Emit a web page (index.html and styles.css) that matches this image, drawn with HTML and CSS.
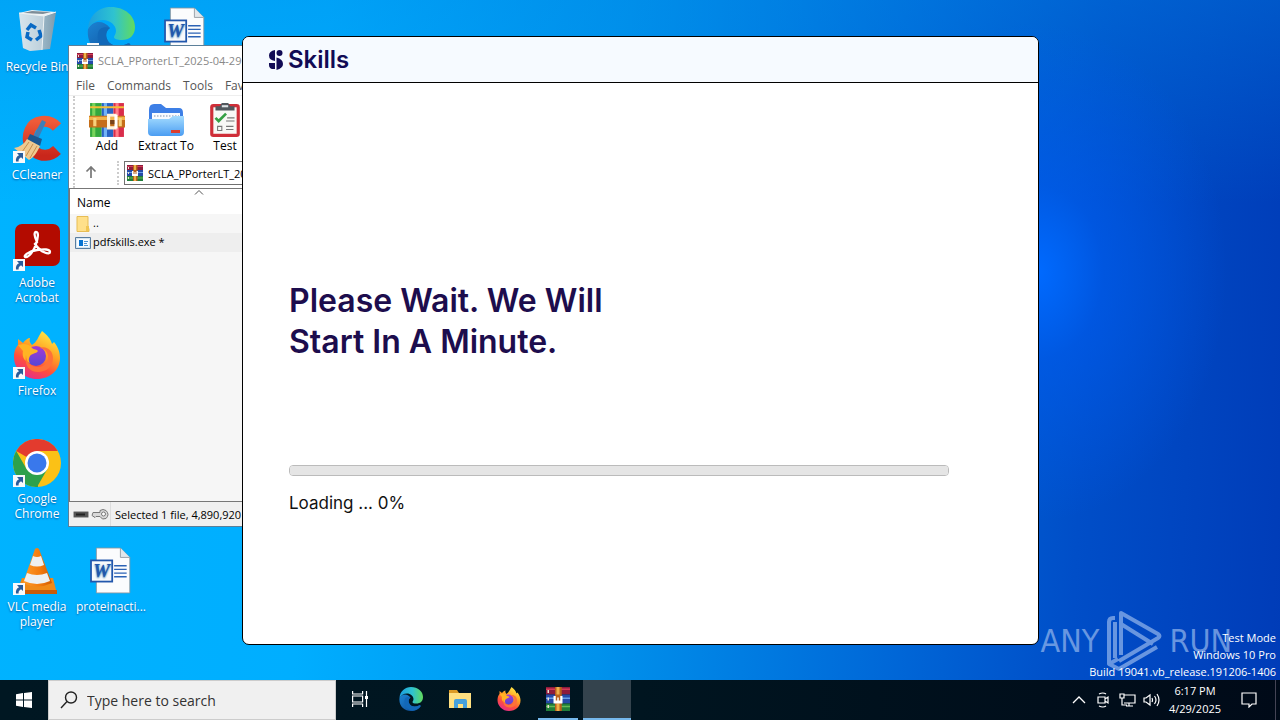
FILE: index.html
```html
<!DOCTYPE html>
<html lang="en">
<head>
<meta charset="utf-8">
<title>Desktop</title>
<link rel="stylesheet" href="styles.css">
</head>
<body>
<svg class="sprite" aria-hidden="true">
  <defs>
    <linearGradient id="edge-a" x1="0" y1="0" x2="1" y2="0"><stop offset="0" stop-color="#1b9fe0"/><stop offset=".55" stop-color="#2fc3cf"/><stop offset="1" stop-color="#62db5c"/></linearGradient>
    <linearGradient id="edge-b" x1="0" y1="0" x2="1" y2="1"><stop offset="0" stop-color="#1c83d2"/><stop offset="1" stop-color="#0d4a96"/></linearGradient>
    <linearGradient id="fox-a" x1=".8" y1="0" x2=".3" y2="1"><stop offset="0" stop-color="#fff04a"/><stop offset=".4" stop-color="#ffa423"/><stop offset=".7" stop-color="#ff503b"/><stop offset="1" stop-color="#e62b8c"/></linearGradient>
    <linearGradient id="fox-b" x1="0" y1="0" x2="0" y2="1"><stop offset="0" stop-color="#a838d2"/><stop offset="1" stop-color="#5447d6"/></linearGradient>
    <linearGradient id="folder-a" x1="0" y1="0" x2="0" y2="1"><stop offset="0" stop-color="#a4dcff"/><stop offset="1" stop-color="#4b9df2"/></linearGradient>
    <linearGradient id="cc-a" x1="0" y1="0" x2="0" y2="1"><stop offset="0" stop-color="#ef5b38"/><stop offset="1" stop-color="#c9261b"/></linearGradient>
    <linearGradient id="bin-a" x1="0" y1="0" x2="1" y2="0"><stop offset="0" stop-color="#d6dde2"/><stop offset=".6" stop-color="#aebbc4"/><stop offset="1" stop-color="#8b9aa5"/></linearGradient>
    <linearGradient id="cone-a" x1="0" y1="0" x2="1" y2="0"><stop offset="0" stop-color="#ff9c2a"/><stop offset=".6" stop-color="#f27a0c"/><stop offset="1" stop-color="#cf5c05"/></linearGradient>
  </defs>
  <symbol id="i-shortcut" viewBox="0 0 12 12"><path fill="#f7f9fb" d="M0 0h12v12H0z"/><path fill="#2a5c9a" d="M4 2h6v6L8 6.300C6 7.500 5.500 8.500 5.600 10.500H3C2.500 7.500 3.500 5.500 6 4.300z"/></symbol>
  <symbol id="i-edge" viewBox="0 0 48 48"><path fill="url(#edge-b)" d="M1 22C-1 38 11 48 24 48c8 0 15-3 19-9 1-2-1-3-3-2-7 3-17 3-20-5-2-5 0-9 3-11C16 12 5 14 1 22z"/><path fill="#1268b8" d="M11 26C9 37 17 46 27 47.500c7-1 13-4 16-8.500 1-2-1-3-3-2-7 3-17 3-20-5-2-5 0-9 3-11-6-2-11 0-12 5z"/><path fill="url(#edge-a)" d="M1 22C2 8 12 0 24 0c14 0 24 9 24 20 0 9-6 13-13 13-5 0-8-1-8-3 0-1 2-3 2-6 0-6-6-11-13-11-7 0-12 4-15 9z"/></symbol>
  <symbol id="i-word" viewBox="0 0 40 46"><path fill="#fbfcfd" stroke="#8d959c" stroke-width=".8" d="M6 1h23l9 9v34H6z"/><path fill="#e2e7eb" stroke="#8d959c" stroke-width=".8" d="M29 1v9h9"/><path stroke="#2b62b5" stroke-width="1.300" d="M23 18h12M23 21.500h12M23 25h12M23 28.500h12"/><path fill="#2257ac" d="M0 12h22v22H0z"/><path fill="#f8fafc" d="M1.700 13.700h18.600v18.600H1.700z"/><text x="11" y="29" text-anchor="middle" font-family="Liberation Serif, serif" font-weight="700" font-style="italic" font-size="18" fill="#2257ac">W</text></symbol>
  <symbol id="i-firefox" viewBox="0 0 48 48"><path fill="url(#fox-a)" d="M29 0c5 4 9 8 10 13l2-2c5 6 6 12 6 16 0 12-10 21-23 21S1 38 1 26c0-6 2-10 4-12V8l5 4c2-3 5-5 7-5-1 3 0 5 2 7 5-3 6-8 10-14z"/><circle cx="23" cy="25" r="10" fill="url(#fox-b)"/><path fill="#ffb423" d="M5 14l5-1c4 0 7 1 9 4 2 2 5 1 6 3-2 3-6 2-8 5-1 2-2 4 0 7-7-2-8-8-7-12z"/><path fill="#ff7139" d="M13 24c0 8 6 12 12 12s10-5 10-10c0-6-5-9-9-9 8-3 14 3 14 10 0 9-7 14-15 14S11 35 13 24z"/></symbol>
  <symbol id="i-books" viewBox="0 0 16 16"><path fill="#8d1b3c" d="M0 0h16v5H0z"/><path fill="#d43c58" d="M0 1h16v1H0z"/><path fill="#254aa8" d="M0 5h16v6H0z"/><path fill="#69a0e8" d="M0 7h16v1H0z"/><path fill="#207d3a" d="M0 11h16v5H0z"/><path fill="#65ba58" d="M0 12.500h16v1H0z"/><path fill="#e9e0cf" d="M1 2h1v2H1zm0 5h1v2H1zm0 5h1v2H1z"/><path fill="#b9611b" d="M6 0h4.500v16H6z"/><path fill="#edb04a" d="M7 0h2v5H7zm0 11h2v5H7z"/><path fill="#fff" d="M5 6h1.500v3h1V7h1v2h1V6H11v5H5z"/></symbol>
  <symbol id="i-add" viewBox="0 0 34 34"><path fill="#34a83e" d="M1 1h11v32H1z"/><path fill="#78d35b" d="M3 1h3v32H3z"/><path fill="#2763c5" d="M12 1h11v32H12z"/><path fill="#71b3f6" d="M14 1h3v32h-3z"/><path fill="#d92d4b" d="M23 1h10v32H23z"/><path fill="#ff7b88" d="M25 1h3v32h-3z"/><path fill="#f4bd36" d="M1 4h32v2H1z"/><path fill="#c56e19" d="M0 13h34v11H0z"/><path fill="#f2b44b" d="M0 14h34v3H0z"/><path fill="#fff4dc" d="M17 11h9v3h-6v9h6v3h-9z"/><path fill="#fff" d="M24 12h3v13h-3z"/><path fill="#77421a" d="M20 17h4v4h-4z"/><path fill="#f7d17c" d="M4 15h3v8H4zm24 0h3v8h-3z"/></symbol>
  <symbol id="i-extract" viewBox="0 0 38 36"><path fill="#3d7fe6" d="M2 8q0-6 5-6h7l5 4h13q4 0 4 5v14H2z"/><path fill="#f8fbff" d="M5 11h28v10H5z"/><path stroke="#a8b5c7" stroke-width="1.500" stroke-dasharray="1.500 1.500" d="M7 14h25"/><path fill="url(#folder-a)" d="M1 17h21l4-3h11v16q0 4-4 4H5q-4 0-4-4z"/><path fill="#dc3d2e" d="M24 28h9v3h-9z"/></symbol>
  <symbol id="i-test" viewBox="0 0 30 34"><rect x="1" y="2" width="28" height="31" rx="3" fill="#cf2e38"/><path fill="#f8f8f5" d="M4 5h22v25H4z"/><path fill="#52585e" d="M6 4h4l2-3h6l2 3h4v4H6z"/><path fill="#dfe3e6" d="M12 3h6v2h-6z"/><path stroke="#35a044" stroke-width="2.500" fill="none" d="M6 15l3 3 7-7"/><path stroke="#777" fill="none" d="M17 15h7M16 18h8M8 23h4v4H8zM16 23h7M16 26h7"/></symbol>
</svg>

<main class="desktop">
  <ul class="icons">
    <li class="icon"><svg class="icon-art" viewBox="0 0 48 48"><path fill="url(#bin-a)" fill-opacity=".9" d="M6 6l37-1-6 37-20 2-7-3z"/><path fill="#eef2f4" d="M6 6l13-3 24 2-12 4z"/><path fill="#7d8d98" d="M10 6l9-2 19 1-8 2z"/><path fill="#fff" fill-opacity=".35" d="M6 6l25 3-2 34-12 1-7-3z"/><path fill="none" stroke="#0869c4" stroke-width="3.500" d="M14 23l4-5 5 3M26 23l2 6-5 4M19 33l-5-3 1-5"/><path stroke="#edf2f4" fill="none" d="M6 6l25 3 12-4M31 9l-2 34"/></svg><span class="label">Recycle Bin</span></li>
    <li class="icon"><svg class="icon-art" viewBox="0 0 48 48"><path fill="none" stroke="url(#cc-a)" stroke-width="11" d="M44 12C36 3 21 5 17 15c-8 18 13 34 27 20"/><path fill="#3d7eb8" d="M29 5l4 2-8 17-5-2z"/><path fill="#1c5790" d="M17 19l12 5-2 7-13-6z"/><path fill="#efc990" d="M14 24l13 7c-3 7-7 12-11 14L1 33c6-1 10-4 13-9z"/><path stroke="#c78d4c" fill="none" d="M16 27L9 37M20 29l-7 12M24 31l-7 12"/></svg><svg class="shortcut"><use href="#i-shortcut"/></svg><span class="label">CCleaner</span></li>
    <li class="icon"><svg class="icon-art" viewBox="0 0 48 48"><rect x="2" y="1" width="45" height="42" rx="7" fill="#b30b00"/><path fill="none" stroke="#fff" stroke-width="2.300" d="M24 19c-3-6-3-10-1-10 3 0 2 6 0 12-2 7-7 13-10 13-4 0 2-6 11-7 7-1 13-1 13 2s-9 1-15-8z"/></svg><svg class="shortcut"><use href="#i-shortcut"/></svg><span class="label">Adobe Acrobat</span></li>
    <li class="icon"><svg class="icon-art"><use href="#i-firefox"/></svg><svg class="shortcut"><use href="#i-shortcut"/></svg><span class="label">Firefox</span></li>
    <li class="icon"><svg class="icon-art" viewBox="0 0 48 48"><circle cx="24" cy="24" r="24" fill="#fbc116"/><path fill="#e33b2e" d="M3.200 12A24 24 0 0 1 44.800 12H24v12z"/><path fill="#2da14c" d="M3.200 12L13.600 30 24 36l1 12A24 24 0 0 1 3.200 12z"/><path fill="#2da14c" d="M34.400 30L24 48l-6-14z"/><circle cx="24" cy="24" r="12" fill="#fff"/><circle cx="24" cy="24" r="9.500" fill="#3978ec"/></svg><svg class="shortcut"><use href="#i-shortcut"/></svg><span class="label">Google Chrome</span></li>
    <li class="icon"><svg class="icon-art" viewBox="0 0 48 48"><path fill="#f08a18" d="M9 31h31l4 16H3z"/><path fill="#c85b09" d="M3 43h41v4H3z"/><path fill="url(#cone-a)" d="M22 2q2-2 4 0l13 34q-15 7-29 0z"/><path fill="#eef0f0" d="M20 9q4 2 8 0l3 9q-7 3-14 0zM14 26q10 4 20 0l3 8q-13 6-26 0z"/></svg><svg class="shortcut"><use href="#i-shortcut"/></svg><span class="label">VLC media player</span></li>
    <li class="icon icon-edge"><svg class="icon-art" role="img" aria-label="Microsoft Edge"><use href="#i-edge"/></svg><svg class="shortcut"><use href="#i-shortcut"/></svg></li>
    <li class="icon icon-document"><svg class="icon-art"><use href="#i-word"/></svg><span class="label">proteinacti...</span></li>
    <li class="icon icon-edge"><svg class="icon-art" role="img" aria-label="Document"><use href="#i-word"/></svg></li>
  </ul>

  <div class="watermark" aria-label="ANY RUN">
    <span>ANY</span>
    <svg class="watermark-mark" viewBox="0 0 58 62"><path fill="none" stroke="currentColor" stroke-width="4" stroke-linejoin="round" d="M10 8H8Q4 8 4 12v42l10 5 38-22M4 54l9-5M10 12v36M16 45V3l37 21q3 2 0 4L14 51M16 14l32 20"/></svg>
    <span>RUN</span>
  </div>
  <p class="build">Test Mode<br>Windows 10 Pro<br>Build 19041.vb_release.191206-1406</p>

  <section class="archive" aria-label="Archive manager">
    <header class="archive-title"><svg class="small-icon"><use href="#i-books"/></svg><span>SCLA_PPorterLT_2025-04-29</span></header>
    <nav class="menu"><button>File</button><button>Commands</button><button>Tools</button><button>Favorites</button></nav>
    <div class="toolbar">
      <button class="tool tool-add"><svg class="tool-art"><use href="#i-add"/></svg>Add</button>
      <button class="tool tool-extract"><svg class="tool-art"><use href="#i-extract"/></svg>Extract To</button>
      <button class="tool tool-test"><svg class="tool-art"><use href="#i-test"/></svg>Test</button>
    </div>
    <div class="address">
      <button class="up" aria-label="Up one level"><svg width="12" height="12" viewBox="0 0 12 12"><path d="M6 12V1M1.500 5.500L6 1l4.500 4.500" fill="none" stroke="#777" stroke-width="1.700"/></svg></button>
      <div class="path"><svg class="small-icon"><use href="#i-books"/></svg><input aria-label="Archive path" value="SCLA_PPorterLT_2025-04-29"></div>
    </div>
    <div class="listing">
      <svg class="sort" viewBox="0 0 10 5"><path d="M1 4.500l4-4 4 4" fill="none" stroke="#555"/></svg>
      <table class="files">
        <thead><tr><th>Name</th></tr></thead>
        <tbody>
          <tr><td><svg class="file-icon" viewBox="0 0 16 16"><path fill="#ffe08a" stroke="#e7bd55" d="M2 .5h11v12h1v3H2z"/><path fill="#f1c653" d="M11 10h3v5h-3z"/></svg>..</td></tr>
          <tr class="selected"><td><svg class="file-icon" viewBox="0 0 16 16"><path fill="#d5e5f0" stroke="#587da0" d="M.5 2.500h15v11H.5z"/><path fill="#f7fbff" d="M2 4h12v8H2z"/><path fill="#0874d1" d="M4 5h4v6H4z"/><path stroke="#4d95d4" d="M9 6.500h4M9 8.500h3M9 10.500h4"/></svg>pdfskills.exe *</td></tr>
        </tbody>
      </table>
    </div>
    <footer class="status"><svg class="status-icons" viewBox="0 0 36 14"><rect x=".5" y="4.500" width="15" height="6" rx="1" fill="#555" stroke="#aaa"/><path stroke="#222" stroke-width="2" d="M3 7.500h9"/><path fill="#d8d8d8" stroke="#777" d="M20 5.500h7v-2q3-2 6 0 4 4 0 8-4 2-6-2h-4l-1 1-3-2z"/><circle cx="30.500" cy="7" r="2" fill="#fff" stroke="#777"/></svg><span class="selection">Selected 1 file, 4,890,920</span></footer>
  </section>

  <section class="installer" aria-label="Skills">
    <header class="brand"><svg class="brand-mark" viewBox="0 0 15 20"><path fill="#120b55" d="M6 0v11Q0 10 0 5.500T6 0zM0 13h6v6H3q-3-1-3-4z"/><circle cx="10.500" cy="3" r="3" fill="#120b55"/><path fill="#120b55" d="M7.500 7.500Q14 9 14 14q0 4-6.500 6z"/></svg><span>Skills</span></header>
    <div class="install-body">
      <h1>Please Wait. We Will<br>Start In A Minute.</h1>
      <progress id="load" value="0" max="100"></progress>
      <label for="load">Loading ... 0%</label>
    </div>
  </section>
</main>

<footer class="taskbar">
  <button class="start" aria-label="Start"><svg width="16" height="16" viewBox="0 0 16 16"><path fill="#fff" d="M0 2.200L7 1v6.500H0zM8 .900L16 0v7.500H8zM0 8.500h7V15l-7-1.200zM8 8.500h8V16l-8-1.100z"/></svg></button>
  <label class="search"><svg width="18" height="18" viewBox="0 0 18 18"><circle cx="11" cy="6.500" r="5.500" fill="none" stroke="#222" stroke-width="1.400"/><path stroke="#222" stroke-width="1.400" d="M7 10.500L1 17"/></svg><input type="text" placeholder="Type here to search" aria-label="Search"></label>
  <nav class="apps">
    <button aria-label="Task view"><svg width="16" height="16" viewBox="0 0 16 16"><path fill="none" stroke="#fff" stroke-width="1.200" d="M.6 0v3h10V0M.6 5h10v6H.6zM.6 16v-3h10v3M14.500 0v16"/><path fill="#fff" d="M13 5h3v3h-3z"/></svg></button>
    <button aria-label="Edge"><svg class="app-icon"><use href="#i-edge"/></svg></button>
    <button aria-label="File Explorer"><svg width="22" height="20" viewBox="0 0 22 20"><path fill="#dc9b25" d="M0 1h8l2 3h12v4H0z"/><path fill="#ffe080" d="M0 4h22v15H0z"/><path fill="#45a0dc" d="M5 19v-7q0-2 2-2h9q2 0 2 2v7h-4v-4H9v4z"/></svg></button>
    <button aria-label="Firefox"><svg class="app-icon"><use href="#i-firefox"/></svg></button>
    <button class="running" aria-label="WinRAR"><svg class="app-icon"><use href="#i-books"/></svg></button>
    <button class="active" aria-label="Skills"></button>
  </nav>
  <div class="tray">
    <button aria-label="Show hidden icons"><svg width="14" height="10" viewBox="0 0 14 10"><path fill="none" stroke="#fff" stroke-width="1.300" d="M1 8l6-6 6 6"/></svg></button>
    <button aria-label="Meet now"><svg width="16" height="16" viewBox="0 0 16 16"><path fill="none" stroke="#fff" stroke-width="1.200" d="M3 5h7v6H3zM10 7l3-2v6l-3-2M4 2q4-2 7 0M4 14q4 2 7 0"/></svg></button>
    <button aria-label="Network"><svg width="17" height="16" viewBox="0 0 17 16"><path fill="none" stroke="#fff" stroke-width="1.200" d="M5 3h11v8H5M1 2h4v4H1zM3 6v7h5M10 11v3M7 14h7"/></svg></button>
    <button aria-label="Volume"><svg width="17" height="14" viewBox="0 0 17 14"><path fill="none" stroke="#fff" stroke-width="1.200" d="M1 5h2l4-3v10L3 9H1zM9 5q1 2 0 4M11.500 3q3 4 0 8M14 1q4 6 0 12"/></svg></button>
    <time class="clock" datetime="2025-04-29T18:17">6:17 PM<br>4/29/2025</time>
    <button class="notice" aria-label="Notifications"><svg width="16" height="16" viewBox="0 0 16 16"><path fill="none" stroke="#fff" stroke-width="1.200" d="M1 1h14v11h-4l-3 3v-3H1z"/></svg></button>
  </div>
</footer>
</body>
</html>
```
FILE: styles.css
```css
* { box-sizing: border-box; }

body {
  margin: 0;
  height: 100vh;
  display: flex;
  flex-direction: column;
  overflow: hidden;
  font: 12px/15px "Open Sans", "Noto Sans", sans-serif;
}

button, input { font: inherit; color: inherit; }
button { margin: 0; padding: 0; border: 0; background: none; }
.sprite { position: absolute; width: 0; height: 0; }

.desktop {
  position: relative;
  flex: 1;
  background:
    radial-gradient(ellipse 190px 250px at 81% 40%, #006aff 0%, #005cf099 35%, transparent 100%),
    linear-gradient(to bottom, #0088e655 0%, transparent 30%),
    linear-gradient(93deg, #00b3ff 0%, #00aeff 25%, #0092ec 48%, #0068d8 70%, #004ec8 84%, #003cb8 100%);
}

.icons {
  display: grid;
  grid-template-rows: repeat(6, 108px);
  grid-auto-columns: 74px;
  grid-auto-flow: column;
  margin: 0;
  padding: 0;
  list-style: none;
  color: #fff;
  text-align: center;
  text-shadow: 0 1px 2px #0057a0;
}

.icon {
  position: relative;
  display: flex;
  flex-direction: column;
  align-items: center;
  padding-top: 7px;
  gap: 4px;
}
.icon-edge { grid-row: 1; }
.icon-document { grid-row: 6; grid-column: 2; }
.icon-art { width: 48px; height: 48px; }
.label { padding: 0 4px; }
.shortcut { position: absolute; left: 13px; top: 43px; width: 12px; height: 12px; }

.archive {
  position: absolute;
  left: 68px;
  top: 45px;
  bottom: 153px;
  width: 176px;
  display: flex;
  flex-direction: column;
  overflow: hidden;
  border: 1px solid #5b7f99;
  background: #fff;
  white-space: nowrap;
}
.small-icon { flex: none; width: 16px; height: 16px; }
.archive-title {
  display: flex;
  align-items: center;
  gap: 5px;
  height: 29px;
  padding-left: 8px;
  color: #888;
  font-size: 11px;
}
.menu {
  display: flex;
  gap: 12px;
  height: 21px;
  padding-left: 7px;
  border-bottom: 1px solid #eee;
  color: #555;
}
.toolbar {
  display: flex;
  height: 64px;
  margin-left: 4px;
  padding-top: 6px;
  border-left: 2px dotted #ccc;
}
.tool { display: flex; flex: none; flex-direction: column; align-items: center; }
.tool-add { width: 64px; }
.tool-extract { width: 54px; }
.tool-test { width: 64px; }
.tool-art { width: 38px; height: 36px; }
.address {
  display: flex;
  height: 28px;
  margin-left: 4px;
  padding-top: 1px;
  border-left: 2px dotted #ccc;
}
.up { flex: none; width: 44px; height: 24px; padding-right: 10px; border-right: 2px dotted #ccc; }
.path {
  display: flex;
  flex: none;
  align-items: center;
  gap: 5px;
  height: 24px;
  margin-left: 5px;
  padding-left: 2px;
  border: 1px solid #707070;
}
.path input { width: 150px; padding: 0; border: 0; outline: 0; background: none; font-size: 11px; }
.listing {
  position: relative;
  flex: 1;
  border-top: 1px solid #777;
  border-left: 1px solid #777;
  background: #f6f6f6;
}
.sort { position: absolute; left: 124px; top: 1px; width: 10px; height: 5px; }
.files { width: 100%; border-collapse: collapse; text-align: left; }
.files th { height: 25px; padding: 1px 7px 0; background: #fff; font-weight: 400; }
.files td { height: 19px; padding: 0 5px; font-size: 11px; }
.selected { background: #eee; }
.file-icon { width: 16px; height: 16px; margin-right: 2px; vertical-align: middle; }
.status {
  display: flex;
  align-items: center;
  height: 25px;
  padding-left: 4px;
  border-top: 1px solid #777;
  background: #f0f0f0;
  font-size: 11px;
}
.status-icons { flex: none; width: 36px; height: 14px; }
.selection { margin-left: 1px; padding: 2px 0 0 4px; border-left: 1px solid #ddd; line-height: 22px; }

.installer {
  position: absolute;
  inset: 36px 241px 35px 242px;
  display: flex;
  flex-direction: column;
  overflow: hidden;
  border: 1px solid #000;
  border-radius: 7px;
  background: #fff;
  font-family: Inter, sans-serif;
}
.brand {
  display: flex;
  align-items: center;
  gap: 4px;
  height: 46px;
  padding-left: 26px;
  border-bottom: 1px solid #000;
  background: #f6faff;
  color: #120b55;
  font-size: 24px;
  font-weight: 600;
  line-height: 30px;
}
.brand-mark { width: 15px; height: 20px; }
.install-body { display: flex; flex: 1; flex-direction: column; padding: 197px 89px 0 46px; }
h1 { margin: 0; color: #1d0d4d; font-size: 32px; font-weight: 600; line-height: 41px; }
progress {
  width: 100%;
  height: 11px;
  margin: 103px 0 15px;
  overflow: hidden;
  border: 1px solid #bbb;
  border-radius: 4px;
  background: #e5e5e5;
  appearance: none;
}
progress::-webkit-progress-bar { background: #e5e5e5; }
.install-body label { color: #111; font-size: 17px; line-height: 24px; }

.watermark {
  position: absolute;
  right: 48px;
  bottom: 8px;
  display: flex;
  align-items: center;
  gap: 6px;
  color: #8bb0ea;
  font: 32px/60px "DejaVu Sans Condensed", "Liberation Sans", sans-serif;
  opacity: .75;
}
.watermark-mark { width: 58px; height: 62px; }
.build {
  position: absolute;
  right: 4px;
  bottom: 0;
  margin: 0;
  color: #fff;
  font-size: 11px;
  line-height: 17px;
  text-align: right;
}

.taskbar {
  display: flex;
  height: 40px;
  background: linear-gradient(90deg, #001722, #001520 50%, #000a18);
  color: #fff;
}
.taskbar button { display: flex; align-items: center; justify-content: center; }
.start { width: 48px; }
.search {
  display: flex;
  align-items: center;
  gap: 9px;
  width: 288px;
  padding-left: 11px;
  border: 1px solid #ccc;
  background: #f0f0f0;
  color: #222;
}
.search input {
  flex: 1;
  min-width: 0;
  height: 24px;
  padding: 0;
  border: 0;
  outline: 0;
  background: none;
  font-size: 14px;
}
.search input::placeholder { color: #333; opacity: 1; }
.apps { display: flex; gap: 1px; }
.apps button { width: 48px; border-bottom: 2px solid transparent; }
.apps button:first-child { margin-right: 2px; }
.app-icon { width: 24px; height: 24px; }
.apps .running { width: 40px; margin: 0 4px; border-color: #76b9ed; }
.apps .active { background: #34434d; border-color: #76b9ed; }
.tray {
  display: flex;
  align-items: center;
  margin: 0 4px 0 auto;
  padding-right: 4px;
  border-right: 1px solid #445;
}
.tray button { width: 24px; height: 40px; }
.clock { width: 64px; line-height: 18px; text-align: center; font-size: 11px; }
.tray .notice { width: 44px; }
```
